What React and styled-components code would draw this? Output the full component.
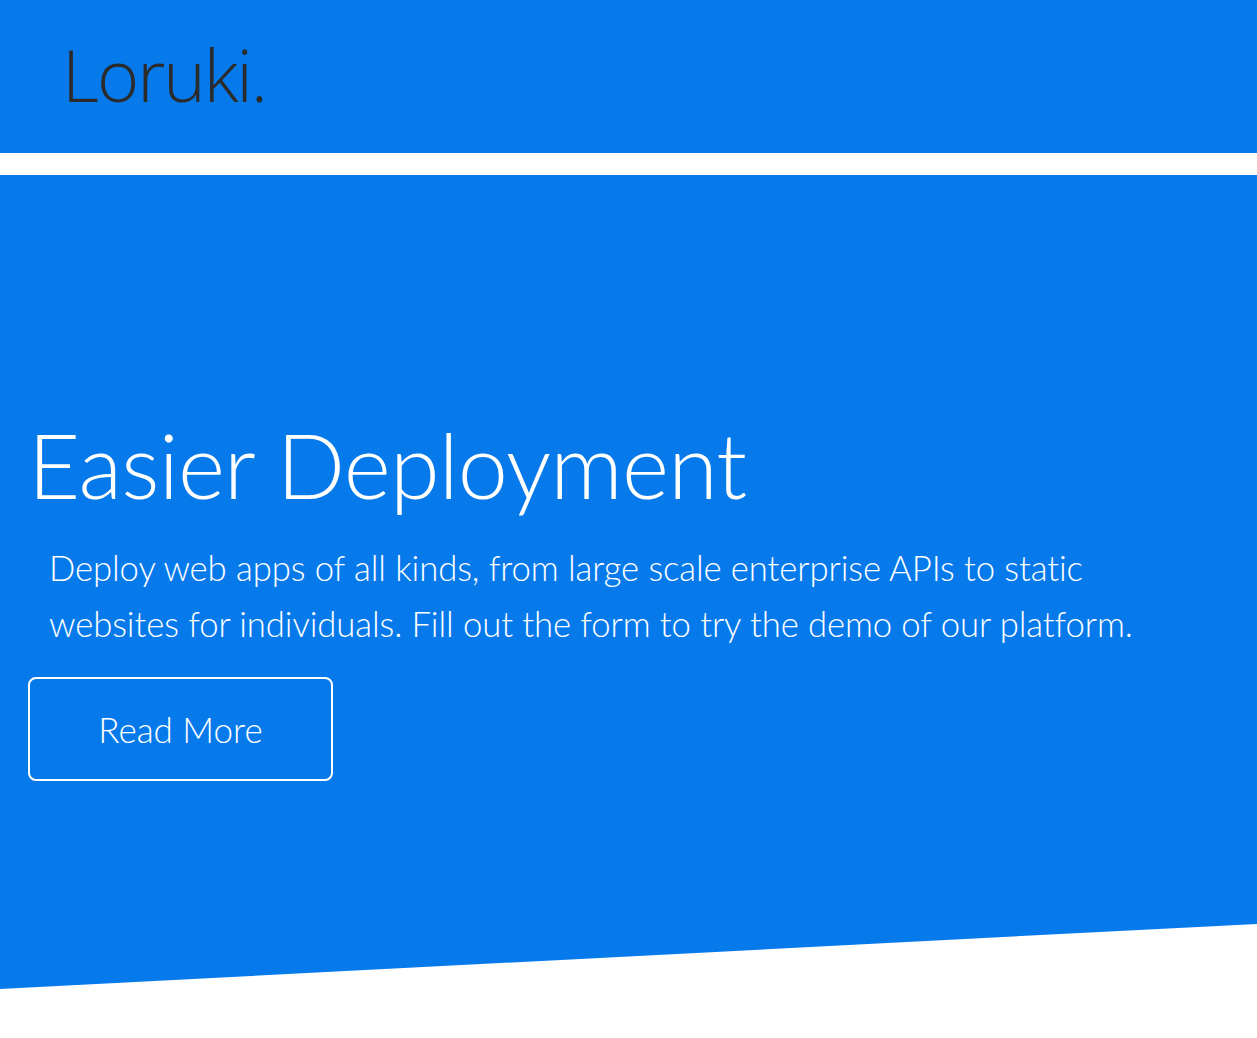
import React from 'react';
import styled, { createGlobalStyle } from 'styled-components';

const GlobalStyle = createGlobalStyle`
  * { box-sizing: border-box; }
  body {
    margin: 0;
    background: #fff;
    font-family: 'Lato', 'Open Sans', sans-serif;
  }
`;

const Header = styled.header`
  height: 153px;
  background: #077aeb;
  padding: 25px 0 0 62px;
`;

const Logo = styled.h1`
  margin: 0;
  font-family: 'Open Sans', sans-serif;
  font-weight: 300;
  font-size: 72px;
  line-height: normal;
  color: #2b2b2b;
  letter-spacing: -2px;
`;

const Showcase = styled.section`
  margin-top: 22px;
  height: 814px;
  background: #077aeb;
  clip-path: polygon(0 0, 100% 0, 100% 92%, 0 100%);
  display: flex;
  flex-direction: column;
  align-items: flex-start;
  padding: 235px 28px 0;
  color: #fff;
`;

const Title = styled.h2`
  margin: 0;
  font-weight: 300;
  font-size: 90px;
  line-height: 1.2;
  letter-spacing: -0.8px;
`;

const Lead = styled.p`
  margin: 22px 0 25px 21px;
  max-width: 1120px;
  font-weight: 300;
  font-size: 34.7px;
  line-height: 56px;
  letter-spacing: -0.1px;
`;

const Button = styled.a`
  display: flex;
  align-items: center;
  justify-content: center;
  width: 305px;
  height: 104px;
  border: 2px solid #fff;
  border-radius: 8px;
  color: #fff;
  font-size: 35px;
  font-weight: 300;
  text-decoration: none;
`;

export default function App() {
  return (
    <>
      <GlobalStyle />
      <Header>
        <Logo>Loruki.</Logo>
      </Header>
      <Showcase>
        <Title>Easier Deployment</Title>
        <Lead>
          Deploy web apps of all kinds, from large scale enterprise APIs to static
          websites for individuals. Fill out the form to try the demo of our platform.
        </Lead>
        <Button href="#">Read More</Button>
      </Showcase>
    </>
  );
}
